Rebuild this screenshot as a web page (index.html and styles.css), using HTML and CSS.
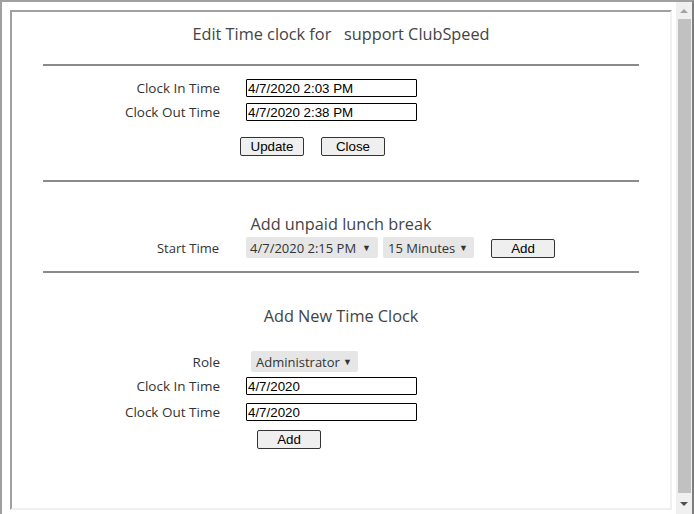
FILE: index.html
```html
<!DOCTYPE html>
<html>
<head>
<meta charset="utf-8">
<title>Edit Time clock</title>
<link rel="stylesheet" href="styles.css">
</head>
<body>
<div class="window">
  <div class="viewport">
    <div class="frame">
      <h1 class="title">Edit Time clock for &nbsp; support ClubSpeed</h1>
      <hr class="rule rule-top">
      <div class="row row-first">
        <span class="label">Clock In Time</span>
        <input class="field" type="text" value="4/7/2020 2:03 PM">
      </div>
      <div class="row row-next">
        <span class="label">Clock Out Time</span>
        <input class="field" type="text" value="4/7/2020 2:38 PM">
      </div>
      <div class="actions actions-edit">
        <button class="btn" type="button">Update</button>
        <button class="btn" type="button">Close</button>
      </div>
      <hr class="rule rule-mid">
      <h2 class="subtitle subtitle-lunch">Add unpaid lunch break</h2>
      <div class="row row-select row-lunch">
        <span class="label">Start Time</span>
        <div class="select select-start"><span>4/7/2020 2:15 PM</span><span class="caret">▼</span></div>
        <div class="select select-dur"><span>15 Minutes</span><span class="caret">▼</span></div>
        <button class="btn btn-lunch" type="button">Add</button>
      </div>
      <hr class="rule rule-low">
      <h2 class="subtitle subtitle-new">Add New Time Clock</h2>
      <div class="row row-select row-role">
        <span class="label">Role</span>
        <div class="select select-role"><span>Administrator</span><span class="caret">▼</span></div>
      </div>
      <div class="row row-newin">
        <span class="label">Clock In Time</span>
        <input class="field" type="text" value="4/7/2020">
      </div>
      <div class="row row-newout">
        <span class="label">Clock Out Time</span>
        <input class="field" type="text" value="4/7/2020">
      </div>
      <div class="actions actions-new">
        <button class="btn" type="button">Add</button>
      </div>
    </div>
  </div>
  <div class="scrollbar">
    <div class="sb-btn"><span class="tri-up"></span></div>
    <div class="sb-thumb"></div>
    <div class="sb-btn sb-btn-down"><span class="tri-down"></span></div>
  </div>
</div>
</body>
</html>
```
FILE: styles.css
```css
html, body {
  margin: 0;
  padding: 0;
  background: #fff;
}

body {
  font-family: "Open Sans", "Noto Sans", sans-serif;
  color: #333;
}

.window {
  display: flex;
  height: 514px;
  box-sizing: border-box;
  border-top: 2px solid #a0a0a0;
  border-left: 2px solid #a0a0a0;
  border-right: 2px solid #7d7d7d;
  overflow: hidden;
}

.viewport {
  flex: 1;
  display: flex;
  padding: 8px 4px 4px 8px;
  background: #fff;
}

.frame {
  flex: 1;
  display: flex;
  flex-direction: column;
  border: 2px solid;
  border-color: #a0a0a0 #f0f0f0 #f0f0f0 #a0a0a0;
  background: #fff;
}

.title,
.subtitle {
  margin: 0;
  font-size: 16.3px;
  font-weight: normal;
  line-height: 22px;
  text-align: center;
  color: #444;
}

.title { margin-top: 11px; }
.subtitle-lunch { margin-top: 31px; }
.subtitle-new { margin-top: 32px; }

.rule {
  border: 0;
  height: 2px;
  background: #8a8a8a;
  margin: 0 31px;
}

.rule-top { margin-top: 19px; }
.rule-mid { margin-top: 24px; }
.rule-low { margin-top: 13px; }

.row {
  display: flex;
  align-items: center;
  height: 18px;
}

.row-select { height: 21px; }

.row-first { margin-top: 13px; }
.row-next { margin-top: 6px; }
.row-lunch { margin-top: 2px; }
.row-role { margin-top: 24px; }
.row-newin { margin-top: 5px; }
.row-newout { margin-top: 8px; }

.label {
  flex: 0 0 208px;
  margin-right: 26px;
  text-align: right;
  font-size: 13.5px;
  line-height: 18px;
  color: #333;
}

.row-lunch .label {
  font-size: 13px;
  padding-right: 1px;
  box-sizing: border-box;
}

.field {
  width: 171px;
  height: 18px;
  box-sizing: border-box;
  margin: 0;
  padding: 0 1px;
  border: 1px solid #000;
  border-radius: 1px;
  font-family: "Liberation Sans", Arial, sans-serif;
  font-size: 13.33px;
  color: #000;
  background: #fff;
}

.actions {
  display: flex;
  gap: 17px;
}

.actions-edit {
  margin-top: 16px;
  padding-left: 228px;
}

.actions-new {
  margin-top: 9px;
  padding-left: 245px;
}

.btn {
  width: 64px;
  height: 19px;
  box-sizing: border-box;
  margin: 0;
  padding: 0;
  border: 1px solid #333;
  border-radius: 2px;
  background: #efefef;
  font-family: "Liberation Sans", Arial, sans-serif;
  font-size: 13.33px;
  line-height: 17px;
  color: #000;
}

.btn-lunch {
  margin-left: 17px;
  align-self: flex-end;
}

.select {
  display: flex;
  align-items: center;
  justify-content: space-between;
  height: 21px;
  box-sizing: border-box;
  border-radius: 2px;
  background: #e6e6e6;
  font-size: 13px;
  color: #333;
}

.caret {
  font-size: 9px;
  color: #333;
  line-height: 1;
}

.select-start {
  width: 132px;
  padding: 0 7px 0 4px;
}

.select-dur {
  width: 91px;
  margin-left: 5px;
  padding: 0 6px 0 5px;
}

.select-role {
  width: 107px;
  margin-left: 5px;
  padding: 0 6px 0 5px;
}

.scrollbar {
  flex: 0 0 16px;
  display: flex;
  flex-direction: column;
  background: #f0f0f0;
}

.sb-btn {
  height: 17px;
  display: flex;
  align-items: center;
  justify-content: center;
}

.sb-btn-down {
  height: auto;
  flex: 1;
}

.sb-thumb {
  height: 474px;
  margin: 0 1px 0 2px;
  background: #c1c1c1;
}

.tri-up {
  width: 0;
  height: 0;
  border-left: 4px solid transparent;
  border-right: 4px solid transparent;
  border-bottom: 4px solid #a3a3a3;
}

.tri-down {
  width: 0;
  height: 0;
  border-left: 4px solid transparent;
  border-right: 4px solid transparent;
  border-top: 4px solid #505050;
}
```
